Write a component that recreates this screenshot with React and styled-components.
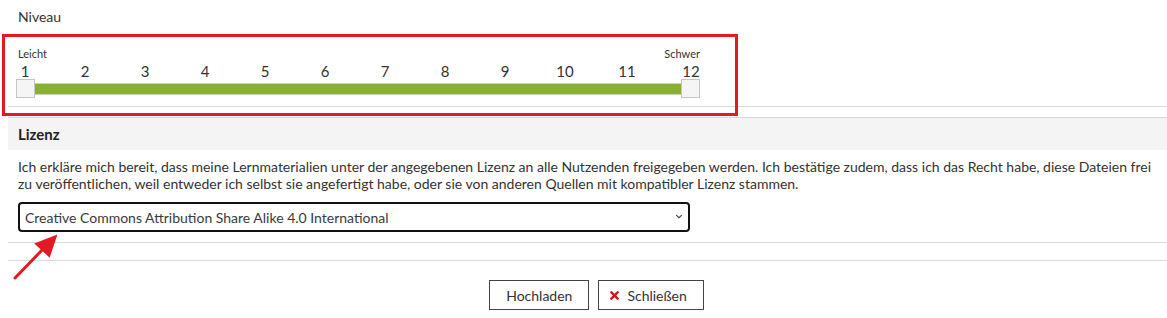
import React from 'react'
import styled, { createGlobalStyle } from 'styled-components'
import { FaTimes } from 'react-icons/fa'

const GlobalStyle = createGlobalStyle`
  html, body {
    margin: 0;
    padding: 0;
    background: #fff;
  }
  body {
    font-family: Lato, "Open Sans", sans-serif;
    font-size: 14px;
    color: #333;
  }
`

// the last labels are pushed right so they line up with the end handle
const levels = Array.from({ length: 12 }, (_, i) => ({
  value: i + 1,
  shift: i === 11 ? 6 : i === 10 ? 2 : 0
}))

export default function App() {
  return (
    <Page>
      <GlobalStyle />

      <LevelSection>
        <FieldLabel>Niveau</FieldLabel>
        <Slider>
          <EndLabels>
            <EndLabel>Leicht</EndLabel>
            <EndLabel>Schwer</EndLabel>
          </EndLabels>
          <Ticks>
            {levels.map(({ value, shift }) => (
              <Tick key={value} $shift={shift}>
                {value}
              </Tick>
            ))}
          </Ticks>
          <Rail>
            <Handle />
            <Track />
            <Handle />
          </Rail>
        </Slider>
      </LevelSection>

      <Fieldset>
        <Legend>Lizenz</Legend>
        <FieldBody>
          <Notice>
            Ich erkläre mich bereit, dass meine Lernmaterialien unter der
            angegebenen Lizenz an alle Nutzenden freigegeben werden. Ich
            bestätige zudem, dass ich das Recht habe, diese Dateien frei zu
            veröffentlichen, weil entweder ich selbst sie angefertigt habe, oder
            sie von anderen Quellen mit kompatibler Lizenz stammen.
          </Notice>
          <SelectWrap>
            <Select defaultValue="cc-by-sa-4">
              <option value="cc-by-sa-4">
                Creative Commons Attribution Share Alike 4.0 International
              </option>
            </Select>
            <Chevron viewBox="0 0 10 6" aria-hidden="true">
              <path d="M1.5 1.2 L5 4.6 L8.5 1.2" />
            </Chevron>
          </SelectWrap>
        </FieldBody>
      </Fieldset>

      <Spacer />

      <Actions>
        <Button>Hochladen</Button>
        <Button>
          <CloseIcon />
          Schließen
        </Button>
      </Actions>

      <HighlightFrame />
      <PointerArrow viewBox="0 0 60 60" aria-hidden="true">
        <line x1="15" y1="51" x2="44" y2="21" />
        <polygon points="55,10 49,28 37,17" />
      </PointerArrow>
    </Page>
  )
}

const Page = styled.div`
  position: relative;
  width: 1167px;
  height: 318px;
  padding-left: 8px;
  box-sizing: border-box;
  overflow: hidden;
`

const LevelSection = styled.div`
  padding: 8px 0 0 10px;
  height: 107px;
  box-sizing: border-box;
  border-bottom: 1px solid #d6d9e0;
`

const FieldLabel = styled.div`
  line-height: 17px;
  margin-bottom: 22px;
`

const Slider = styled.div`
  width: 684px;
  margin-left: -2px;
`

const EndLabels = styled.div`
  display: flex;
  justify-content: space-between;
  padding-left: 2px;
  font-size: 11px;
  line-height: 13px;
`

const EndLabel = styled.span``

const Ticks = styled.div`
  display: grid;
  grid-template-columns: repeat(12, 60px);
  margin: 3px 0 0 -21px;
  font-size: 15px;
  line-height: 16px;
`

const Tick = styled.span`
  text-align: center;
  transform: translateX(${props => props.$shift}px);
`

const Rail = styled.div`
  display: flex;
  align-items: center;
  height: 19px;
`

const Handle = styled.div`
  width: 17px;
  height: 17px;
  flex: none;
  background: #f5f5f5;
  border: 1px solid #c6c6c6;
`

const Track = styled.div`
  flex: 1;
  height: 10px;
  background: #88b034;
  border-top: 1px solid #c9d3b4;
  border-bottom: 1px solid #c9d3b4;
`

const Fieldset = styled.section`
  margin-top: 10px;
  border-top: 1px solid #d6d9e0;
  border-bottom: 1px solid #d6d9e0;
`

const Legend = styled.div`
  background: #f4f4f4;
  padding: 0 10px;
  height: 32px;
  display: flex;
  align-items: center;
  font-size: 15px;
  font-weight: 700;
  color: #222;
`

const FieldBody = styled.div`
  padding: 8px 10px 10px;
`

const Notice = styled.p`
  margin: 0 0 10px;
  line-height: 17px;
  max-width: 1140px;
`

const SelectWrap = styled.div`
  position: relative;
  width: 672px;
`

const Select = styled.select`
  appearance: none;
  display: block;
  width: 100%;
  height: 30px;
  padding: 0 28px 0 5px;
  font-family: Lato, "Open Sans", sans-serif;
  font-size: 14px;
  color: #3a3a3a;
  background: #fff;
  border: 2px solid #111;
  border-radius: 4px;
  outline: none;
`

const Chevron = styled.svg`
  position: absolute;
  right: 7px;
  top: 12px;
  width: 8px;
  height: 5px;
  fill: none;
  stroke: #444;
  stroke-width: 1.5;
  pointer-events: none;
`

const Spacer = styled.div`
  height: 17px;
  border-bottom: 1px solid #d6d9e0;
`

const Actions = styled.div`
  display: flex;
  justify-content: center;
  gap: 9px;
  padding: 19px 0 0 18px;
`

const Button = styled.button`
  display: inline-flex;
  align-items: center;
  gap: 6px;
  height: 30px;
  padding: 0 16px;
  font-family: Lato, "Open Sans", sans-serif;
  font-size: 14px;
  color: #333;
  background: #fff;
  border: 1px solid #444;
  border-radius: 0;
`

const CloseIcon = styled(FaTimes)`
  color: #d01b1b;
  font-size: 13px;
  margin-left: -7px;
`

const HighlightFrame = styled.div`
  position: absolute;
  left: 2px;
  top: 34px;
  width: 730px;
  height: 76px;
  border: 3px solid #e21b23;
  pointer-events: none;
`

const PointerArrow = styled.svg`
  position: absolute;
  left: 0;
  top: 227px;
  width: 60px;
  height: 60px;
  stroke: #e21b23;
  fill: #e21b23;
  stroke-width: 3;
  stroke-linecap: round;
  pointer-events: none;
`
